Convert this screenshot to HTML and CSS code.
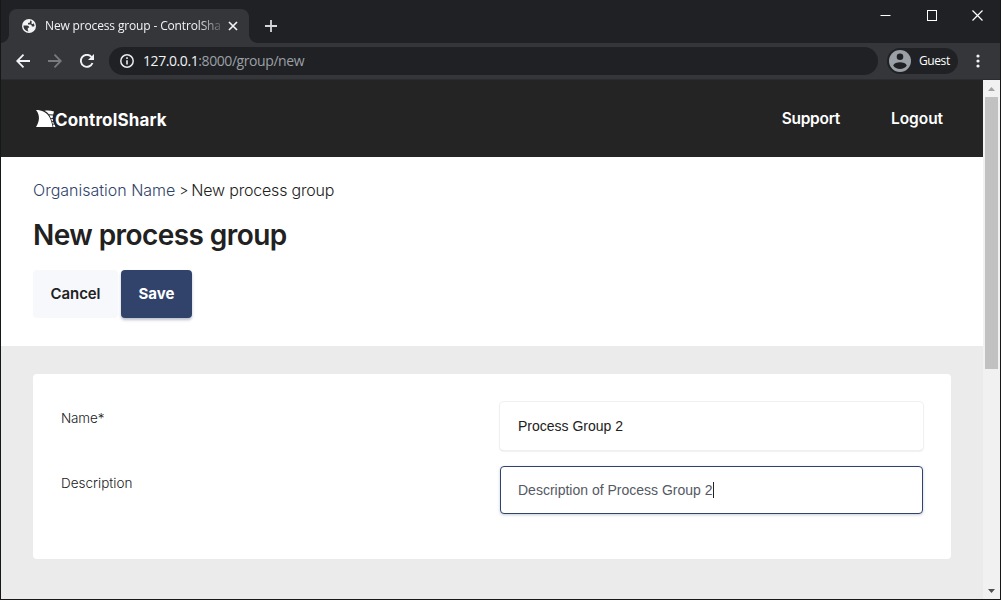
FILE: index.html
```html
<!DOCTYPE html>
<html lang="en">
<head>
<meta charset="utf-8">
<title>New process group - ControlShark</title>
<link rel="stylesheet" href="styles.css">
</head>
<body>
<div class="window">
  <div class="tabstrip">
    <div class="tab">
      <svg class="globe" width="14" height="14" viewBox="0 0 14 14"><circle cx="7" cy="7" r="7" fill="#f1f3f4"/><path d="M1.500 6.600H5C6.500 6.600 7.200 7.600 7.200 8.700H5.800V11.200L6.600 12.500C3.500 12.300 1.300 9.800 1.500 6.600ZM8.200 1.600 8 3.400 6 4V5.600H8.500C9.500 5.600 9.800 6.500 9.800 7.600H11.500C12 7.600 12.500 7.300 12.500 6.500 12.300 5.500 11.800 4.500 11.200 3.700V5H9.600V2Z" fill="#35363a"/></svg>
      <span class="tab-title">New process group - ControlSha</span>
      <svg class="tab-close" width="10" height="10" viewBox="0 0 10 10"><path d="m1 1 8 8M9 1 1 9" stroke="#f1f3f4" stroke-width="1.700"/></svg>
    </div>
    <svg class="new-tab" width="12" height="12" viewBox="0 0 12 12"><path d="M6 0v12M0 6h12" stroke="#d5d7da" stroke-width="1.800"/></svg>
    <div class="controls">
      <svg width="11" height="11" viewBox="0 0 11 11"><path d="M.5 5.500h10" stroke="#fff"/></svg>
      <svg width="11" height="11" viewBox="0 0 11 11"><path d="M1 .5h9.500v9.500H1z" fill="none" stroke="#fff" shape-rendering="crispEdges"/></svg>
      <svg width="11" height="11" viewBox="0 0 11 11"><path d="m.5.5 10 10m0-10-10 10" stroke="#fff" stroke-width="1.200"/></svg>
    </div>
  </div>
  <div class="toolbar">
    <svg class="nav" width="14" height="14" viewBox="0 0 14 14"><path d="M14 7H1M7.500.7 1.200 7l6.300 6.300" fill="none" stroke="#f1f3f4" stroke-width="1.800"/></svg>
    <svg class="nav" width="14" height="14" viewBox="0 0 14 14"><path d="M0 7h13M6.500.7 12.800 7l-6.300 6.300" fill="none" stroke="#797a7d" stroke-width="1.800"/></svg>
    <svg class="nav" width="14" height="14" viewBox="0 0 14 14"><path d="M12.500 9A6 6 0 1 1 11.500 3" fill="none" stroke="#f1f3f4" stroke-width="1.900"/><path d="M14 0v6H8z" fill="#f1f3f4"/></svg>
    <div class="address">
      <svg width="14" height="14" viewBox="0 0 14 14"><circle cx="7" cy="7" r="6.200" fill="none" stroke="#e8eaed" stroke-width="1.500"/><path d="M7 6.200v4.300M7 3.300v1.600" stroke="#e8eaed" stroke-width="1.600"/></svg>
      <span class="url"><span class="host">127.0.0.1</span>:8000/group/new</span>
    </div>
    <div class="profile">
      <svg width="22" height="22" viewBox="0 0 22 22"><circle cx="11" cy="11" r="11" fill="#9aa0a6"/><circle cx="11" cy="6.800" r="3.300" fill="#202124"/><path d="M4.200 15.500C5 13.300 8 12.200 11 12.200s6 1.100 6.800 3.300C16.500 17.600 14 19 11 19s-5.500-1.400-6.800-3.500Z" fill="#202124"/></svg>
      <span class="guest">Guest</span>
    </div>
    <svg class="kebab" width="4" height="14" viewBox="0 0 4 14" fill="#f1f3f4"><circle cx="2" cy="2" r="1.600"/><circle cx="2" cy="7" r="1.600"/><circle cx="2" cy="12" r="1.600"/></svg>
  </div>
  <div class="viewport">
    <div class="page">
      <header class="site-header">
        <div class="logo">
          <svg width="20" height="17" viewBox="0 0 20 17"><path d="M0 0C6 0 10.500 2.500 13 6.500c1.900 3 2.900 6.500 3.600 10.500H0C3.400 12 4.500 5.500 0 0Z" fill="#fff"/><path d="M8.500.7C12 .2 15 .5 18 1.600L17.200 4.500 12.800 4.300C11.800 2.700 10.300 1.500 8.500.7ZM13.400 5.200l3.600.2-.4 2.700-1.900-.2ZM15.100 8.800l1.700.2.100 2.200-1-.1ZM16.200 12l1 .1.800 1.700-1.300-.1ZM16.900 14.600l1.800.1.700 2.300h-2Z" fill="#fff"/></svg>
          <span class="logo-name">ControlShark</span>
        </div>
        <nav class="links"><a class="support">Support</a><a class="logout">Logout</a></nav>
      </header>
      <section class="intro">
        <div class="crumbs"><a class="crumb-org">Organisation Name</a><span class="crumb-sep">&gt;</span><span class="crumb-here">New process group</span></div>
        <h1 class="title">New process group</h1>
        <div class="actions"><button class="btn cancel"><span class="cancel-text">Cancel</span></button><button class="btn save"><span class="save-text">Save</span></button></div>
      </section>
      <main class="content">
        <div class="card">
          <div class="row"><label class="label label-name">Name*</label><div class="field"><span class="value-name">Process Group 2</span></div></div>
          <div class="row"><label class="label label-desc">Description</label><div class="field focused"><span class="value-desc">Description of Process Group 2</span><span class="caret"></span></div></div>
        </div>
      </main>
    </div>
    <div class="scrollbar">
      <svg width="7" height="4" viewBox="0 0 7 4"><path d="M0 4 3.500 0 7 4z" fill="#a3a3a3"/></svg>
      <div class="thumb"></div>
      <svg class="down" width="7" height="4" viewBox="0 0 7 4"><path d="M0 0h7L3.500 4z" fill="#505050"/></svg>
    </div>
  </div>
</div>
</body>
</html>
```
FILE: styles.css
```css
* { box-sizing: border-box; }
body { margin: 0; font-family: "Inter", "Liberation Sans", sans-serif; color: #212121; }
svg { display: block; flex: none; }
span, a, label, h1 { white-space: nowrap; }
.window { width: 1001px; height: 600px; overflow: hidden; display: flex; flex-direction: column; background: #161719; border: 1px solid #161719; border-top: 0; }
.tabstrip { height: 43px; background: #202124; display: flex; align-items: flex-start; padding-left: 8px; }
.tab { width: 240px; height: 34px; margin-top: 9px; background: #35363a; border-radius: 8px 8px 0 0; display: flex; align-items: center; padding-left: 13px; position: relative; }
.tab::before, .tab::after { content: ""; position: absolute; bottom: 0; width: 8px; height: 8px; }
.tab::before { left: -8px; background: radial-gradient(circle at 0 0, transparent 7.500px, #35363a 8px); }
.tab::after { right: -8px; background: radial-gradient(circle at 100% 0, transparent 7.500px, #35363a 8px); }
.tab-title { width: 176px; margin-left: 9px; font: 12px/18px "Open Sans", sans-serif; letter-spacing: -0.15px; color: #f1f3f4; mask-image: linear-gradient(90deg, #000 152px, #0003 176px); }
.tab-close { margin-left: 7px; }
.new-tab { margin: 20px 0 0 16px; }
.controls { display: flex; gap: 35px; margin: 10px 17.5px 0 auto; }
.toolbar { height: 37px; background: #35363a; border-bottom: 1px solid #2b2c2f; display: flex; align-items: center; padding-left: 15px; }
.nav { margin-right: 18px; }
.address { width: 769px; height: 28px; margin-left: -3px; border-radius: 14px; background: #202124; display: flex; align-items: center; padding-left: 11px; }
.url { margin-left: 9px; font: 14px/20px "Open Sans", sans-serif; letter-spacing: -0.42px; color: #9aa0a6; }
.host { color: #f1f3f4; }
.profile { width: 71px; height: 26px; border-radius: 13px; background: #202124; margin-left: 9px; display: flex; align-items: center; padding-left: 2px; }
.guest { margin-left: 8px; font: 12px/18px "Open Sans", sans-serif; letter-spacing: -0.4px; color: #fff; }
.kebab { margin-left: 18px; }
.viewport { height: 519px; display: flex; }
.page { width: 982px; background: #fff; display: flex; flex-direction: column; }
.site-header { height: 77px; background: #242424; color: #fff; display: flex; align-items: center; justify-content: space-between; padding: 0 40px 0 35px; }
.logo { display: flex; align-items: center; }
.logo-name { margin-left: -1px; margin-top: 3px; font-size: 17px; line-height: 20px; font-weight: 700; letter-spacing: 0.15px; }
.links { display: flex; gap: 51px; font-size: 15.5px; font-weight: 600; line-height: 20px; padding-top: 1px; }
.support { letter-spacing: -0.28px; }
.logout { letter-spacing: -0.05px; }
.intro { height: 189px; padding: 22px 32px 0; }
.crumbs { display: flex; font-size: 16px; font-weight: 300; line-height: 22px; }
.crumb-sep { width: 16px; padding-left: 4px; font-size: 14px; }
.crumb-here { letter-spacing: -0.19px; }
.crumb-org { color: #32436b; }
.title { margin: 17px 0 0; font-size: 28px; line-height: 34px; font-weight: 600; letter-spacing: -0.57px; display: table; }
.actions { display: flex; gap: 3px; margin-top: 18px; }
.btn { height: 48px; border: 0; border-radius: 4px; padding: 0; font: 600 15px/20px "Inter", sans-serif; color: #212121; }
.cancel { width: 85px; background: #f7f8fb; letter-spacing: -0.1px; }
.save { width: 71px; background: #32436b; color: #fff; font-weight: 700; box-shadow: 0 2px 3px #32436b55; }
.content { height: 253px; background: #ebebeb; padding: 28px 32px; }
.card { width: 918px; height: 185px; background: #fff; border-radius: 4px; padding: 28px; display: flex; flex-direction: column; gap: 16px; }
.row { display: grid; grid-template-columns: 439px 423px; height: 48px; }
.label { justify-self: start; margin-top: 6px; font-size: 13.5px; font-weight: 300; line-height: 20px; height: 20px; }
.label-name { letter-spacing: -0.15px; }
.label-desc { margin-top: 7px; }
.field { display: flex; align-items: center; height: 48px; padding: 0 18px; border-radius: 4px; font: 14px/18px "Liberation Sans", sans-serif; color: #212121; background: #fff; box-shadow: 0 0 0 1px #f0f0f0, 0 1px 2px #0003; }
.focused { border: 1px solid #32436b; padding: 0 17px; color: #555963; box-shadow: 0 1px 3px #32436b44; }
.caret { width: 1px; height: 16px; background: #222; }
.scrollbar { width: 17px; background: #f1f1f1; display: flex; flex-direction: column; align-items: center; padding: 7px 0 6px; }
.thumb { width: 13px; height: 272px; margin-top: 6px; background: #c1c1c1; }
.down { margin-top: auto; }
```
